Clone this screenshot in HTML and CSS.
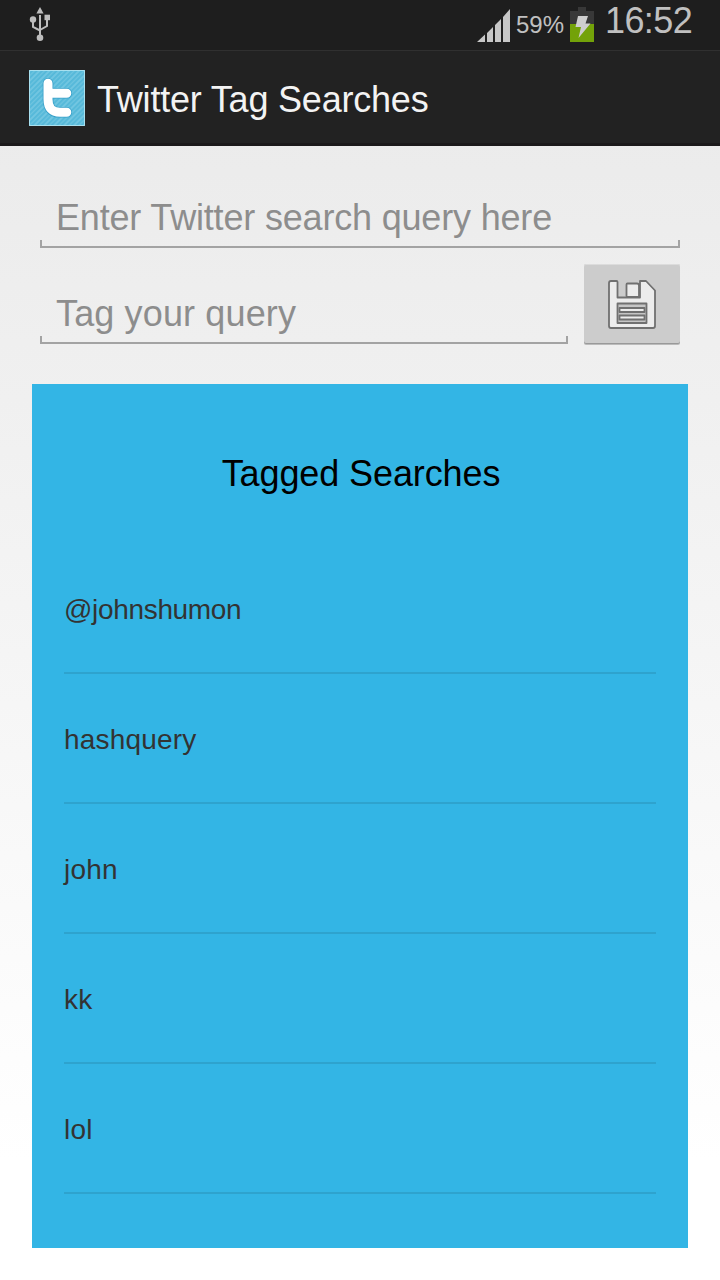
FILE: index.html
```html
<!DOCTYPE html>
<html lang="en">
<head>
<meta charset="utf-8">
<title>Twitter Tag Searches</title>
<link rel="stylesheet" href="styles.css">
</head>
<body>
<div class="screen">
  <div class="status-bar">
    <svg class="usb" width="24" height="36" viewBox="0 0 24 36">
      <g fill="none" stroke="#bdbdbd" stroke-width="2"><path d="M12 9v22M5 13v8l7 3.500M19 11v9l-7 4"/></g>
      <g fill="#bdbdbd"><path d="M12 1l3.600 6.500h-7.200z"/><circle cx="5" cy="13.500" r="3.200"/><path d="M16.500 8.700h5.500v5.500h-5.500z"/><circle cx="12" cy="31.700" r="3.300"/></g>
    </svg>
    <div class="status-right">
      <svg class="signal" width="33" height="33" viewBox="0 0 33 33" fill="#c6c6c6">
        <path d="M0 33L8 25.500V33zM10 33V24L16 18V33zM18 33V16L24 10V33zM26 33V8L33 0V33z"/>
      </svg>
      <span class="percent">59%</span>
      <svg class="battery" width="24" height="35" viewBox="0 0 24 35">
        <path fill="#383838" d="M8 0h8v4h8v13H0V4h8z"/>
        <path fill="#73a209" d="M0 17h24v18H0z"/>
        <path fill="#cecece" d="M8 9h10l-2.500 7.500h5L8.500 31l2.500-11H5.500z"/>
      </svg>
      <span class="clock">16:52</span>
    </div>
  </div>
  <header class="action-bar">
    <svg width="56" height="56" viewBox="0 0 56 56">
      <defs>
        <pattern id="hatch" width="7" height="7" patternUnits="userSpaceOnUse" patternTransform="rotate(45)">
          <path d="M1 0v7" stroke="#8fd3e8" stroke-width="1"/><path d="M4.500 0v7" stroke="#6fc4df" stroke-width="1.400"/>
        </pattern>
      </defs>
      <path fill="#54b8d9" d="M0 0h56v56H0z"/>
      <path fill="url(#hatch)" d="M0 0h56v56H0z"/>
      <path fill="none" stroke="#a8e0ef" d="M.5.5h55v55H.5z"/>
      <path d="M19 13.300v16q0 13 12 13h6.800M19 23.300h18.800" fill="none" stroke="#369fc8" stroke-width="10.600" stroke-linecap="round" stroke-linejoin="round"/>
      <path d="M19 13.300v16q0 13 12 13h6.800M19 23.300h18.800" fill="none" stroke="#fff" stroke-width="9" stroke-linecap="round" stroke-linejoin="round"/>
    </svg>
    <span class="app-title">Twitter Tag Searches</span>
  </header>
  <main class="content">
    <div class="field query"><span>Enter Twitter search query here</span></div>
    <div class="tag-row">
      <div class="field"><span class="tag-hint">Tag your query</span></div>
      <button class="save" type="button" aria-label="Save">
        <svg width="48" height="50" viewBox="0 0 48 50">
          <g fill="#ececec" stroke="#707070" stroke-width="1.800" stroke-linejoin="round">
            <path d="M3 1h5.500q1 0 1 1v15.500H32V1h6l9 9.500V46q0 2-2 2H3q-2 0-2-2V3q0-2 2-2z"/>
            <path d="M19.500 3.500h9.500q2 0 2 2v11.500H19.500q-1 0-1-1V4.500q0-1 1-1z"/>
            <path fill="#c5c5c5" d="M9.500 23.500h29v19.500h-29z"/>
            <path d="M11.500 28h25v4h-25zM11.500 35.500h25v4h-25z"/>
          </g>
        </svg>
      </button>
    </div>
    <section class="panel">
      <h1>Tagged Searches</h1>
      <ul>
        <li><span class="handle">@johnshumon</span></li>
        <li><span>hashquery</span></li>
        <li><span>john</span></li>
        <li><span>kk</span></li>
        <li><span>lol</span></li>
      </ul>
    </section>
  </main>
</div>
</body>
</html>
```
FILE: styles.css
```css
* { box-sizing: border-box; }
body { margin: 0; font-family: "Liberation Sans", Arial, sans-serif; }
.screen {
  width: 720px;
  height: 1280px;
  overflow: hidden;
  background: linear-gradient(#e9e9e9 0, #f0f0f0 400px, #fff 1160px);
}
.status-bar {
  display: flex;
  justify-content: space-between;
  height: 51px;
  padding: 0 28px;
  background: #1e1e1e;
  border-bottom: 1px solid #303030;
  color: #c0c0c0;
}
.usb { margin-top: 6px; }
.status-right { display: flex; align-items: flex-start; }
.signal { margin: 9px 6px 0 0; }
.percent { width: 50px; margin-top: 12px; font-size: 24px; line-height: 26px; white-space: nowrap; }
.battery { margin: 7px 11px 0 4px; }
.clock { width: 87px; font-size: 36px; line-height: 42px; letter-spacing: -0.6px; white-space: nowrap; }
.action-bar {
  display: flex;
  align-items: flex-start;
  height: 95px;
  padding: 19px 29px 0;
  gap: 12px;
  background: #222;
  border-bottom: 3px solid #1b191a;
  color: #f3f3f3;
}
.app-title { margin-top: 9px; font-size: 36px; line-height: 42px; letter-spacing: -0.2px; white-space: nowrap; }
.content { padding: 46px 32px 0; }
.field {
  height: 56px;
  padding: 5px 16px 0;
  border-bottom: 2px solid #a3a3a3;
  background:
    linear-gradient(#a3a3a3, #a3a3a3) left bottom / 2px 6px no-repeat,
    linear-gradient(#a3a3a3, #a3a3a3) right bottom / 2px 6px no-repeat;
  color: #8d8d8d;
  font-size: 36px;
  line-height: 42px;
  letter-spacing: -0.18px;
  white-space: nowrap;
}
.query { margin: 0 8px; }
.tag-row {
  display: flex;
  align-items: flex-end;
  gap: 16px;
  height: 96px;
  padding: 0 8px;
}
.tag-row .field { flex: 1; }
.tag-hint { letter-spacing: 0.14px; }
.save {
  display: flex;
  justify-content: center;
  width: 96px;
  height: 80px;
  padding: 16px 0 0;
  border: 0;
  border-radius: 2px;
  background: #ccc;
  box-shadow: inset 0 1px #dcdcdc, inset 0 -1px #999, 0 1px #bbb;
}
.panel {
  height: 864px;
  margin-top: 40px;
  padding: 69px 32px 0;
  background: #33b5e5;
}
h1 { margin: 0; padding-left: 2px; font-size: 36px; font-weight: 400; line-height: 42px; letter-spacing: -0.1px; text-align: center; color: #000; }
ul { margin: 49px 0 0; padding: 0; list-style: none; }
li {
  display: flex;
  align-items: center;
  height: 130px;
  padding-top: 4px;
  border-bottom: 2px solid #2ea3ce;
  color: #333;
  font-size: 28px;
  line-height: 32px;
  letter-spacing: 0.2px;
}
.handle { letter-spacing: -0.33px; }
```
